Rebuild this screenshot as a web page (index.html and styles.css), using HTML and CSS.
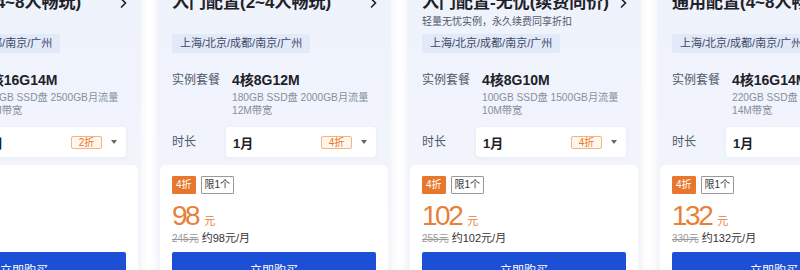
FILE: index.html
```html
<!DOCTYPE html>
<html lang="zh-CN">
<head>
    <meta charset="UTF-8">
    <meta name="viewport" content="width=device-width, initial-scale=1.0">
    <title>轻量服务器 - 特惠套餐</title>
    <link rel="stylesheet" href="styles.css">
</head>
<body>
    <div class="cards">
        <!-- 通用配置 -->
        <div class="card">
            <div class="card-top">
                <div class="card-title">
                    <span>通用配置(4~8人畅玩)</span>
                    <svg class="chevron" width="10" height="12" viewBox="0 0 10 12"><path d="M3 1.5 L7.5 6 L3 10.5" fill="none" stroke="#1d2129" stroke-width="1.6"/></svg>
                </div>
                <div class="card-sub"></div>
                <span class="region">上海/北京/成都/南京/广州</span>
                <div class="spec">
                    <span class="label">实例套餐</span>
                    <div>
                        <div class="spec-value">4核16G14M</div>
                        <div class="spec-detail">220GB SSD盘 2500GB月流量<br>14M带宽</div>
                    </div>
                </div>
                <div class="spec duration">
                    <span class="label">时长</span>
                    <div class="select">
                        <span class="select-value">1月</span>
                        <span class="select-badge">2折</span>
                        <span class="caret"></span>
                    </div>
                </div>
            </div>
            <div class="card-bottom">
                <button class="buy-button">立即购买</button>
            </div>
        </div>

        <!-- 入门配置 -->
        <div class="card">
            <div class="card-top">
                <div class="card-title">
                    <span>入门配置(2~4人畅玩)</span>
                    <svg class="chevron" width="10" height="12" viewBox="0 0 10 12"><path d="M3 1.5 L7.5 6 L3 10.5" fill="none" stroke="#1d2129" stroke-width="1.6"/></svg>
                </div>
                <div class="card-sub"></div>
                <span class="region">上海/北京/成都/南京/广州</span>
                <div class="spec">
                    <span class="label">实例套餐</span>
                    <div>
                        <div class="spec-value">4核8G12M</div>
                        <div class="spec-detail">180GB SSD盘 2000GB月流量<br>12M带宽</div>
                    </div>
                </div>
                <div class="spec duration">
                    <span class="label">时长</span>
                    <div class="select">
                        <span class="select-value">1月</span>
                        <span class="select-badge">4折</span>
                        <span class="caret"></span>
                    </div>
                </div>
            </div>
            <div class="card-bottom">
                <div class="tags">
                    <span class="tag tag-discount">4折</span>
                    <span class="tag tag-limit">限1个</span>
                </div>
                <div class="price"><span class="price-num">98</span><span class="price-unit">元</span></div>
                <div class="price-sub"><span class="price-old">245元</span> 约98元/月</div>
                <button class="buy-button">立即购买</button>
            </div>
        </div>

        <!-- 入门配置-无忧 -->
        <div class="card">
            <div class="card-top">
                <div class="card-title">
                    <span>入门配置-无忧(续费同价)</span>
                    <svg class="chevron" width="10" height="12" viewBox="0 0 10 12"><path d="M3 1.5 L7.5 6 L3 10.5" fill="none" stroke="#1d2129" stroke-width="1.6"/></svg>
                </div>
                <div class="card-sub">轻量无忧实例，永久续费同享折扣</div>
                <span class="region">上海/北京/成都/南京/广州</span>
                <div class="spec">
                    <span class="label">实例套餐</span>
                    <div>
                        <div class="spec-value">4核8G10M</div>
                        <div class="spec-detail">100GB SSD盘 1500GB月流量<br>10M带宽</div>
                    </div>
                </div>
                <div class="spec duration">
                    <span class="label">时长</span>
                    <div class="select">
                        <span class="select-value">1月</span>
                        <span class="select-badge">4折</span>
                        <span class="caret"></span>
                    </div>
                </div>
            </div>
            <div class="card-bottom">
                <div class="tags">
                    <span class="tag tag-discount">4折</span>
                    <span class="tag tag-limit">限1个</span>
                </div>
                <div class="price"><span class="price-num">102</span><span class="price-unit">元</span></div>
                <div class="price-sub"><span class="price-old">255元</span> 约102元/月</div>
                <button class="buy-button">立即购买</button>
            </div>
        </div>

        <!-- 通用配置 -->
        <div class="card">
            <div class="card-top">
                <div class="card-title">
                    <span>通用配置(4~8人畅玩)</span>
                    <svg class="chevron" width="10" height="12" viewBox="0 0 10 12"><path d="M3 1.5 L7.5 6 L3 10.5" fill="none" stroke="#1d2129" stroke-width="1.6"/></svg>
                </div>
                <div class="card-sub"></div>
                <span class="region">上海/北京/成都/南京/广州</span>
                <div class="spec">
                    <span class="label">实例套餐</span>
                    <div>
                        <div class="spec-value">4核16G14M</div>
                        <div class="spec-detail">220GB SSD盘 2500GB月流量<br>14M带宽</div>
                    </div>
                </div>
                <div class="spec duration">
                    <span class="label">时长</span>
                    <div class="select">
                        <span class="select-value">1月</span>
                        <span class="select-badge">4折</span>
                        <span class="caret"></span>
                    </div>
                </div>
            </div>
            <div class="card-bottom">
                <div class="tags">
                    <span class="tag tag-discount">4折</span>
                    <span class="tag tag-limit">限1个</span>
                </div>
                <div class="price"><span class="price-num">132</span><span class="price-unit">元</span></div>
                <div class="price-sub"><span class="price-old">330元</span> 约132元/月</div>
                <button class="buy-button">立即购买</button>
            </div>
        </div>
    </div>
</body>
</html>
```

FILE: styles.css
```css
body {
    margin: 0;
    background: #fff;
    font-family: "Liberation Sans", "Noto Sans CJK SC", sans-serif;
    color: #1d2129;
    overflow: hidden;
}
.cards {
    display: flex;
    gap: 16px;
    margin-left: -93px;
    margin-top: -21px;
}
.card {
    flex: none;
    width: 234px;
    box-sizing: border-box;
    display: flex;
    flex-direction: column;
    background: linear-gradient(180deg, #eef2fb 0%, #f4f6fc 100%);
    border-radius: 8px;
    padding: 0 3px 3px;
    box-shadow: 0 2px 8px rgba(40, 60, 110, 0.07);
}
.card-top {
    padding: 12px 12px 8px;
}
.card-title {
    display: flex;
    align-items: center;
    justify-content: space-between;
    font-size: 17px;
    font-weight: bold;
    line-height: 24px;
}
.chevron {
    margin-right: -2px;
}
.card-sub {
    font-size: 10px;
    color: #4e5969;
    line-height: 18px;
    height: 18px;
    margin-top: -2px;
}
.region {
    display: inline-block;
    margin-top: 3px;
    padding: 0 8px;
    height: 19px;
    line-height: 19px;
    font-size: 11px;
    color: #3d4a66;
    background: #e2e9f8;
    border-radius: 2px;
}
.spec {
    display: flex;
    margin-top: 18px;
}
.label {
    width: 60px;
    flex: none;
    font-size: 12px;
    color: #4e5969;
    line-height: 18px;
}
.spec-value {
    font-size: 14px;
    font-weight: bold;
    line-height: 18px;
}
.spec-detail {
    margin-top: 2px;
    font-size: 10.2px;
    line-height: 13px;
    color: #86909c;
}
.duration {
    margin-top: 10px;
    align-items: center;
}
.duration .label {
    width: 54px;
}
.select {
    flex: 1;
    display: flex;
    align-items: center;
    height: 30px;
    padding: 0 9px 0 7px;
    background: #fff;
    border-radius: 4px;
    box-shadow: 0 1px 4px rgba(40, 60, 110, 0.06);
}
.select-value {
    font-size: 13px;
    font-weight: bold;
}
.select-badge {
    margin-left: auto;
    width: 31px;
    height: 13px;
    box-sizing: border-box;
    line-height: 11px;
    text-align: center;
    font-size: 10px;
    color: #e8772e;
    background: #fff7ee;
    border: 1px solid #f2b583;
    border-radius: 2px;
}
.caret {
    margin-left: 9px;
    width: 0;
    height: 0;
    border-left: 3px solid transparent;
    border-right: 3px solid transparent;
    border-top: 4px solid #666;
}
.card-bottom {
    flex: 1;
    display: flex;
    flex-direction: column;
    align-items: flex-start;
    background: #fff;
    border-radius: 6px;
    padding: 11px 12px 0;
}
.tags {
    display: flex;
    gap: 5px;
}
.tag {
    height: 18px;
    box-sizing: border-box;
    line-height: 16px;
    font-size: 10px;
    padding: 0 3px;
    border-radius: 1px;
}
.tag-discount {
    background: #e8772e;
    color: #fff;
    border: 1px solid #e8772e;
}
.tag-limit {
    color: #333;
    border: 1px solid #999;
}
.price {
    display: flex;
    align-items: baseline;
    height: 26px;
    margin-top: 9px;
    line-height: 26px;
    color: #e8803a;
}
.price-num {
    font-size: 28px;
    letter-spacing: -2.5px;
}
.price-unit {
    font-size: 11px;
    margin-left: 6px;
}
.price-sub {
    height: 14px;
    margin-top: 2px;
    font-size: 11px;
    line-height: 14px;
    color: #333;
}
.price-old {
    font-size: 10px;
    color: #999;
    text-decoration: line-through;
}
.buy-button {
    margin-top: 7px;
    width: 100%;
    height: 34px;
    border: none;
    border-radius: 2px;
    background: #1b4fd6;
    color: #fff;
    font-family: inherit;
    font-size: 12px;
    cursor: pointer;
}
.card:first-child .buy-button {
    margin-top: auto;
}
```
